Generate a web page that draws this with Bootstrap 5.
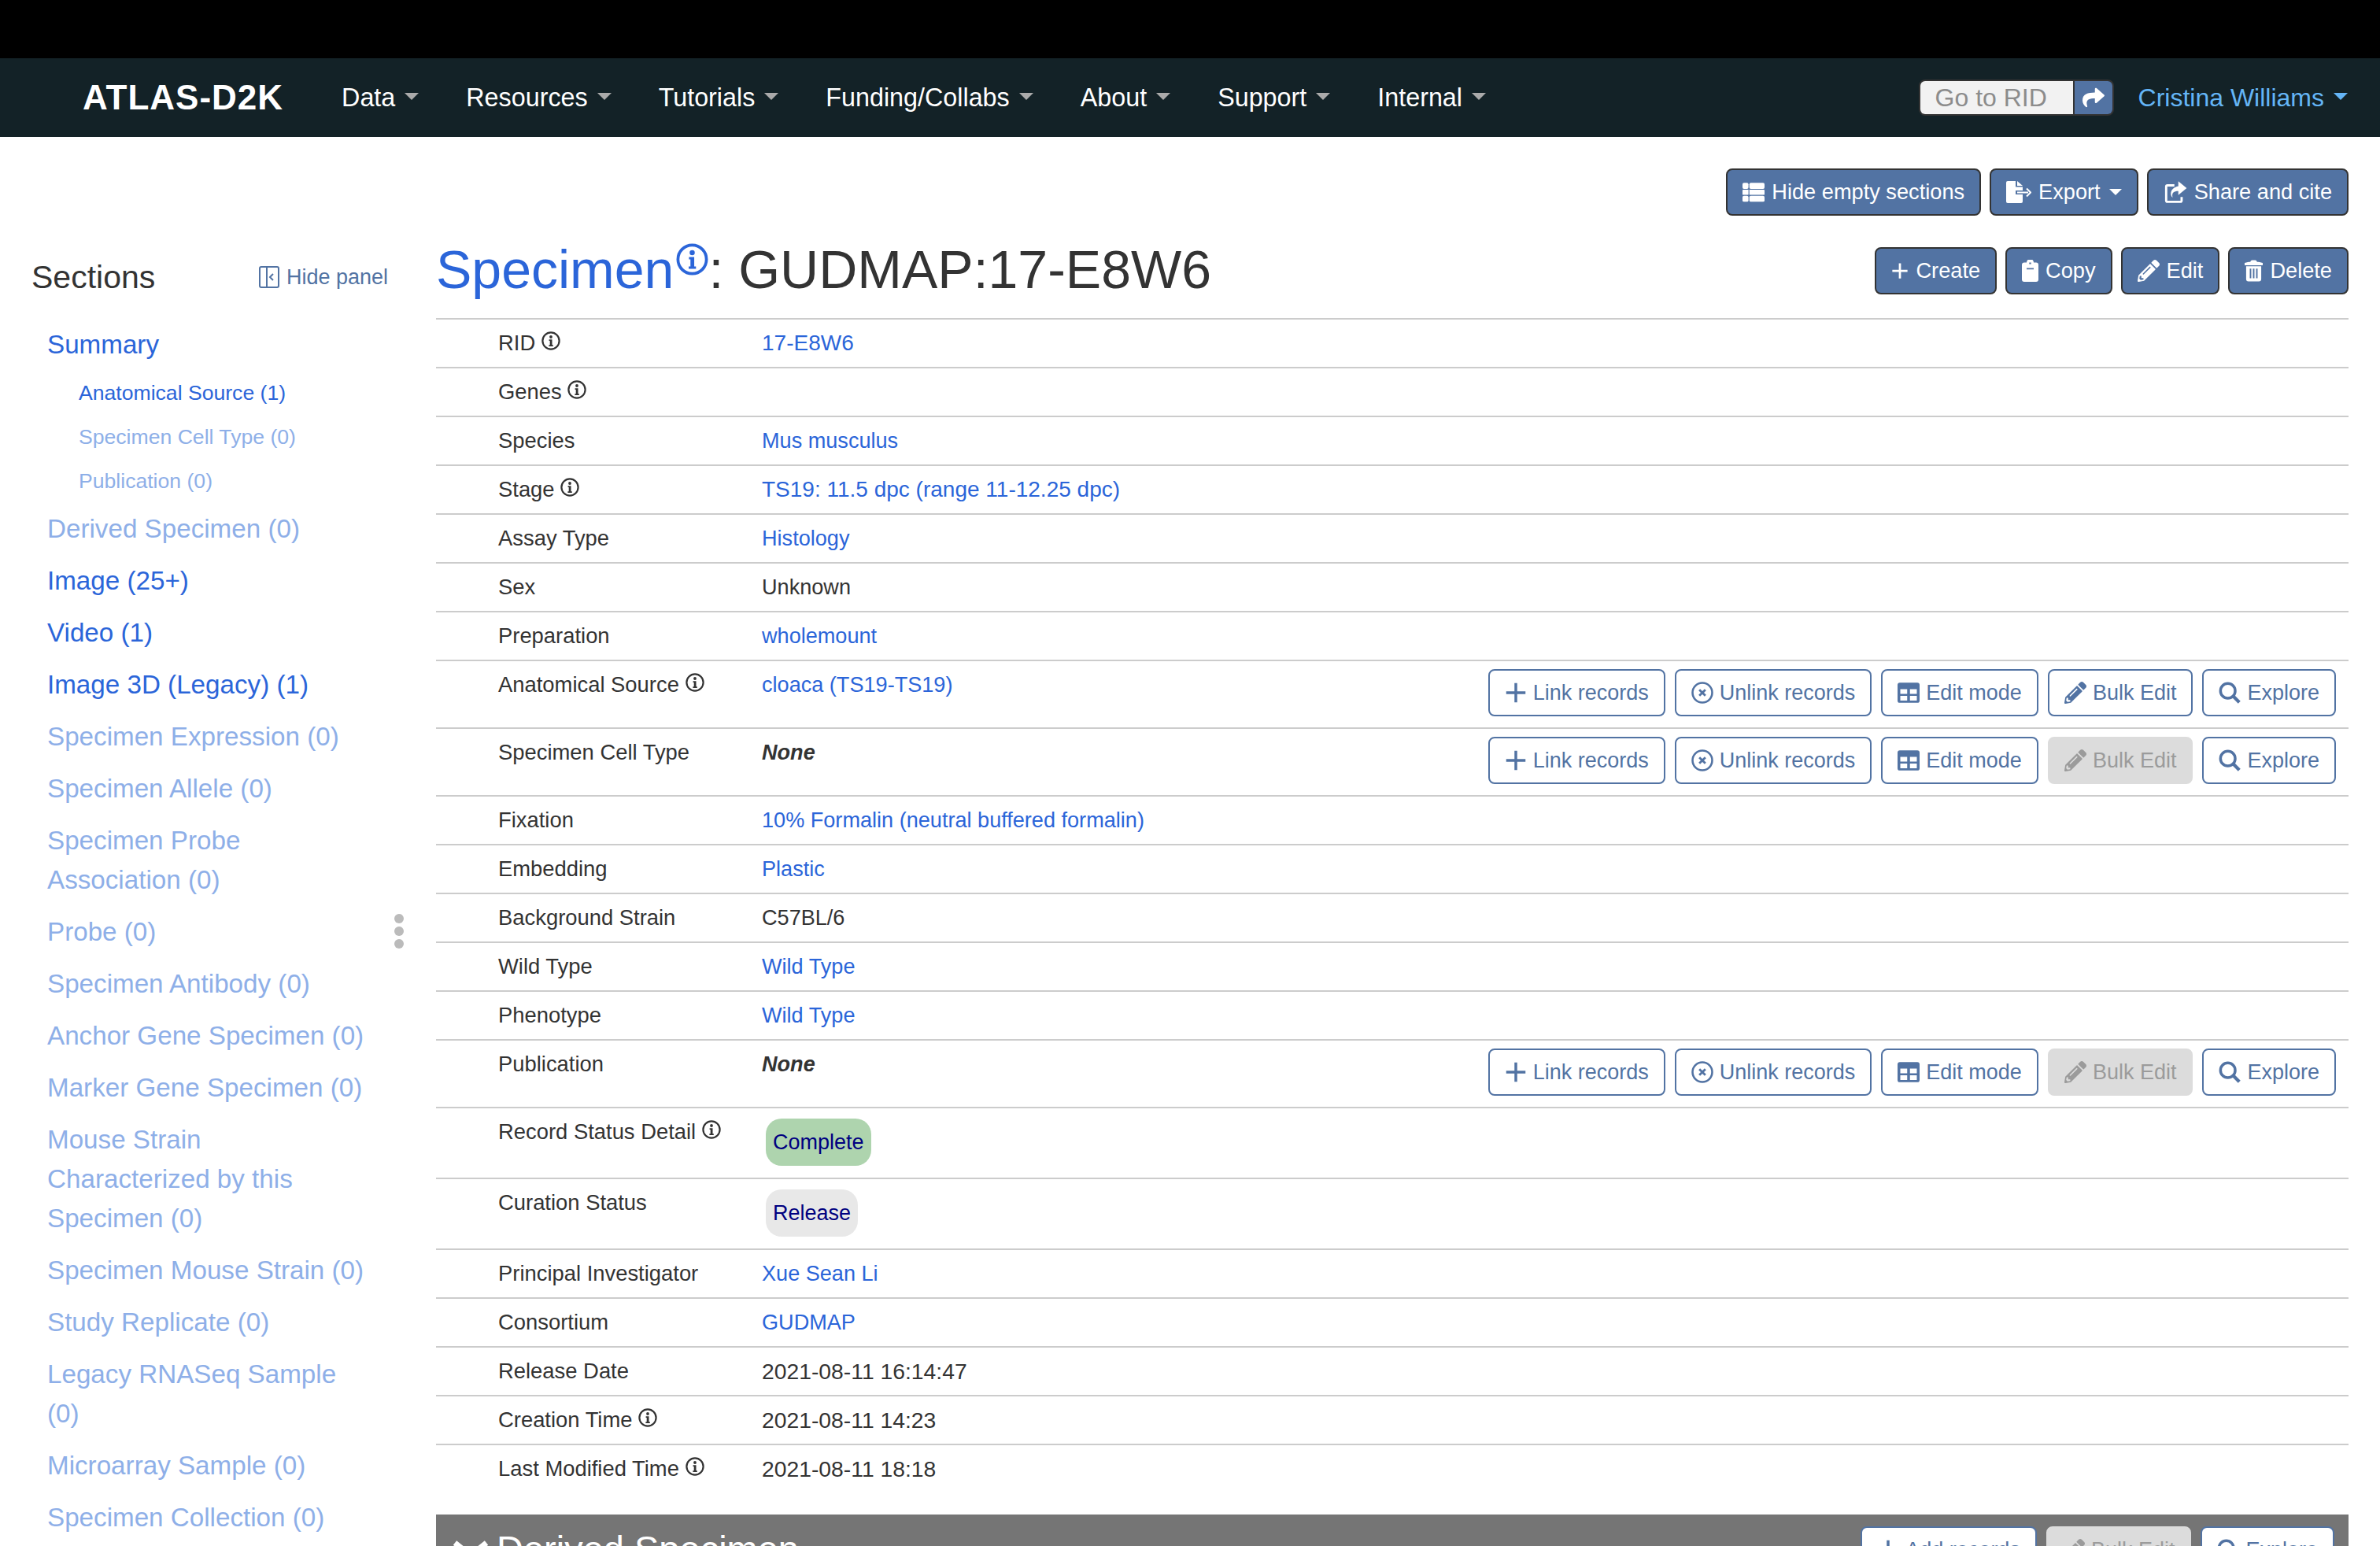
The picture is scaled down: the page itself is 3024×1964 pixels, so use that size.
<!DOCTYPE html>
<html lang="en">
<head>
  <meta charset="UTF-8">
  <meta name="viewport" content="width=device-width, initial-scale=1.0">
  <title>Specimen: GUDMAP:17-E8W6</title>
  <link href="https://cdn.jsdelivr.net/npm/bootstrap@5.3.2/dist/css/bootstrap.min.css" rel="stylesheet">
  <style>
    html, body { height: 100%; }
    body {
      font-family: "Liberation Sans", Arial, sans-serif;
      font-size: 27.4px;
      line-height: 40px;
      color: #333;
      overflow: hidden;
      display: flex;
      flex-direction: column;
    }
    a { text-decoration: none; color: #2b65d9; }
    .top-strip { height: 74px; background: #000; flex: none; }

    /* navbar */
    .atlas-nav { height: 100px; background: #132227; padding: 0 41px 0 105px; flex: none; }
    .atlas-nav .navbar-brand { font-size: 44px; font-weight: 700; color: #fff; letter-spacing: 1px; margin-right: 44px; padding: 0; line-height: 50px; }
    .atlas-nav .navbar-nav .nav-link { font-size: 32.3px; line-height: 44px; color: #fff; padding: 0 30px; }
    .atlas-nav .dropdown-toggle::after { margin-left: 12px; color: #aaa; }
    .atlas-nav .user-link { color: #64b5f6; font-size: 32px; line-height: 44px; margin-left: 31px; }
    .atlas-nav .user-link::after { color: #64b5f6; }
    .rid-group { width: 248px; height: 46px; flex-wrap: nowrap; border: 2px solid #333; border-radius: 8px; overflow: hidden; }
    .rid-group .form-control { font-family: inherit; font-size: 32px; line-height: 42px; height: 42px; padding: 0 0 0 19px; background: #f2f2f2; border: 0; border-radius: 0; color: #333; min-height: 0; }
    .rid-group .form-control::placeholder { color: #8c8c8c; }
    .rid-group .btn { width: 50px; height: 42px; padding: 0; border: 0; border-left: 2px solid #333; border-radius: 0; background: #5273a3; color: #fff; display: flex; align-items: center; justify-content: center; }

    /* buttons */
    .act-btn {
      font-size: 27.2px;
      line-height: 38px;
      height: 60px;
      padding: 0 19px;
      border-radius: 8px;
      border: 2px solid #333;
      background: #5273a3;
      color: #fff;
      display: inline-flex;
      align-items: center;
      gap: 9px;
      white-space: nowrap;
    }
    .act-btn:hover { background: #5273a3; color: #fff; border-color: #333; }
    .act-btn.dropdown-toggle::after { margin-left: 2px; }
    .line-btn, .off-btn { font-size: 27px; gap: 8px; }
    .line-btn { background: #fff; color: #5273a3; border-color: #5273a3; }
    .line-btn:hover { background: #fff; color: #5273a3; border-color: #5273a3; }
    .off-btn, .off-btn:disabled { background: #dcdcdc; color: #9b9b9b; border-color: #dcdcdc; opacity: 1; }
    .ico { fill: currentColor; flex: none; }
    .ico-28 { width: 28px; height: 28px; }
    .ico-plus-sm { width: 22px; height: 22px; }
    .ico-file { width: 32px; height: 28px; }
    .ico-box { width: 30px; height: 30px; }
    .ico-clip { width: 21px; height: 28px; }
    .ico-bin { width: 23px; height: 28px; }

    .page-tools { padding: 40px 40px 0 0; gap: 11px; flex: none; }
    .page-body { flex: 1 1 auto; min-height: 0; }

    /* sidebar */
    .side-col { width: 554px; flex: none; position: relative; }
    .side-head { height: 131px; padding: 24px 61px 0 40px; }
    .side-title { font-size: 41px; line-height: 50px; }
    .hide-link { font-size: 27px; color: #5273a3; display: flex; align-items: center; gap: 9px; }
    .side-list { list-style: none; margin: 0; padding: 0 0 0 60px; width: 468px; }
    .side-list a { display: block; font-size: 33.2px; line-height: 50px; padding: 8px 0; }
    .side-list .sub-item a { font-size: 26.6px; line-height: 38px; padding: 9px 0 9px 40px; }
    .side-list .is-empty a { color: #8eafe8; }
    .drag-dots { position: absolute; left: 501px; top: 887px; display: flex; flex-direction: column; gap: 4px; }
    .drag-dots span { width: 12px; height: 12px; border-radius: 50%; background: #bbb; }

    /* record */
    .rec-col { flex: 1 1 auto; min-width: 0; padding-right: 40px; }
    .rec-head { height: 130px; }
    .rec-title { font-size: 68px; line-height: 76px; font-weight: 400; margin: 6px 0 0; color: #333; }
    .rec-title svg { width: 41px; height: 41px; vertical-align: 16px; margin-left: 3px; color: #2b65d9; }
    .title-tools { gap: 11px; padding-top: 10px; }
    .rec-table { margin: 0; border-top: 2px solid #ccc; color: #333; }
    .rec-table > tbody > tr > td { padding: 10px 0; border-bottom: 2px solid #ccc; vertical-align: top; background: transparent; color: #333; box-shadow: none; font-size: 27.1px; }
    .rec-table > tbody > tr > td:first-child { width: 414px; padding-left: 79px; font-size: 27.4px; }
    .rec-table > tbody > tr > td:last-child { padding-right: 16px; }
    .rec-table > tbody > tr:last-child > td { border-bottom: 0; }
    .rec-table > tbody > tr > td.num-cell { font-size: 28px; }
    .rec-table > tbody > tr > td.date-cell { font-size: 28.3px; }
    .rec-table a { color: #2b65d9; }
    .info-dot { width: 24px; height: 24px; vertical-align: top; margin: 5px 0 0 0; }
    .row-tools { gap: 12px; margin: 0 0 4px; }
    .status-pill { display: block; width: fit-content; height: 60px; line-height: 60px; font-size: 27px; padding: 0 9px; margin: 3px 0 5px 5px; border-radius: 20px; color: #000080; }
    .pill-green { background: #aed4ae; }
    .pill-grey { background: #e8e8e8; }
    .none-val { font-weight: 700; font-style: italic; }

    .sect-bar { margin-top: 28px; height: 100px; background: #757575; color: #fff; padding: 15px 18px 0 22px; align-items: flex-start; }
    .sect-bar h2 { font-size: 47px; line-height: 50px; font-weight: 400; margin: 4px 0 0; }
    .sect-name { gap: 11px; }
  </style>
</head>
<body>
  <!-- icons, all drawn on a 24 box unless noted -->
  <svg width="0" height="0" class="position-absolute">
    <symbol id="i-info" viewBox="0 0 24 24">
      <circle cx="12" cy="12" r="10.6" fill="none" stroke="currentColor" stroke-width="2.2"/>
      <circle cx="12" cy="7" r="1.9"/>
      <path d="M9.600 10.200h3.900v7h1.300v1.800H9.400v-1.800h1.300v-5.200H9.600z"/>
    </symbol>
    <symbol id="i-rows" viewBox="0 0 24 24">
      <rect x="0" y="2" width="6.500" height="6.500" rx="1.600"/><rect x="7.500" y="2" width="16.500" height="6.500" rx="1.600"/>
      <rect x="0" y="9.500" width="6.500" height="5.500" rx=".4"/><rect x="7.500" y="9.500" width="16.500" height="5.500" rx=".4"/>
      <rect x="0" y="16" width="6.500" height="6.500" rx="1.600"/><rect x="7.500" y="16" width="16.500" height="6.500" rx="1.600"/>
    </symbol>
    <symbol id="i-export" viewBox="0 0 32 28">
      <path d="M0 2a2 2 0 0 1 2-2h10v7.500h9V12H12v5h9v9a2 2 0 0 1-2 2H2a2 2 0 0 1-2-2z"/>
      <path d="M14 0l7 6h-7z"/>
      <path d="M14 13.500h14v2H14z"/>
      <path d="M26 9.500l5 5-5 5" fill="none" stroke="currentColor" stroke-width="2"/>
    </symbol>
    <symbol id="i-share-box" viewBox="0 0 24 24">
      <path d="M11 4H4a2.500 2.500 0 0 0-2.500 2.500v14A2.500 2.500 0 0 0 4 23h13a2.500 2.500 0 0 0 2.500-2.500V17h-2.300v3.700H3.800V6.300H11z"/>
      <path d="M15 1l8.500 7-8.500 7v-4c-4.500 0-7 1.500-5.800 6.500C6.500 15.500 6 8 15 6z"/>
    </symbol>
    <symbol id="i-plus" viewBox="0 0 24 24">
      <path d="M10.500 1.500h3v9h9v3h-9v9h-3v-9h-9v-3h9z"/>
    </symbol>
    <symbol id="i-clip" viewBox="0 0 21 28">
      <path fill-rule="evenodd" d="M6 3.500a4.500 4.500 0 0 1 9 0h3a3 3 0 0 1 3 3V25a3 3 0 0 1-3 3H3a3 3 0 0 1-3-3V6.500a3 3 0 0 1 3-3zM9.300 3.500v2h2.400v-2zM6 10.500v1.800h9v-1.800z"/>
    </symbol>
    <symbol id="i-pencil" viewBox="0 0 512 512">
      <path d="M497.900 142.100l-46.100 46.100c-4.700 4.700-12.300 4.700-17 0l-111-111c-4.700-4.700-4.700-12.300 0-17l46.100-46.100c18.700-18.700 49.100-18.700 67.900 0l60.100 60.100c18.800 18.700 18.800 49.100 0 67.900zM284.200 99.800L21.600 362.400.4 483.900c-2.900 16.400 11.400 30.600 27.800 27.800l121.500-21.300 262.600-262.600c4.700-4.700 4.700-12.300 0-17l-111-111c-4.800-4.700-12.400-4.700-17.100 0zM124.100 339.900c-5.500-5.500-5.500-14.300 0-19.800l154-154c5.500-5.500 14.300-5.500 19.800 0s5.500 14.300 0 19.800l-154 154c-5.500 5.500-14.300 5.500-19.800 0zM88 424h48v36.300l-64.500 11.300-31.100-31.100L51.700 376H88v48z"/>
    </symbol>
    <symbol id="i-trash" viewBox="0 0 24 28">
      <path d="M0 3.500C3 2.500 5.500 2.300 7.500 2.200 8 .8 9 0 10 0h4c1 0 2 .8 2.500 2.200 2 .1 4.500.3 7.500 1.300v3.300H0z"/>
      <path fill-rule="evenodd" d="M2 8h20v17a3 3 0 0 1-3 3H5a3 3 0 0 1-3-3zM6.800 11v13h2V11zM11 11v13h2V11zM15.200 11v13h2V11z"/>
    </symbol>
    <symbol id="i-unlink" viewBox="0 0 24 24">
      <circle cx="12" cy="12" r="10.700" fill="none" stroke="currentColor" stroke-width="2.200"/>
      <path d="M8.700 8.700l6.600 6.600M15.300 8.700l-6.600 6.600" stroke="currentColor" stroke-width="2.400"/>
    </symbol>
    <symbol id="i-table" viewBox="0 0 24 24">
      <path fill-rule="evenodd" d="M2.500 1h19A2.500 2.500 0 0 1 24 3.500v17a2.500 2.500 0 0 1-2.500 2.500h-19A2.500 2.500 0 0 1 0 20.500v-17A2.500 2.500 0 0 1 2.500 1zM3 8.200v5h7.500v-5zM13.500 8.200v5H21v-5zM3 15.500v5h7.500v-5zM13.500 15.500v5H21v-5z"/>
    </symbol>
    <symbol id="i-search" viewBox="0 0 24 24">
      <circle cx="10" cy="10" r="8" fill="none" stroke="currentColor" stroke-width="3"/>
      <path d="M15.500 15.500l7 7" stroke="currentColor" stroke-width="3.600"/>
    </symbol>
    <symbol id="i-share" viewBox="0 0 512 512">
      <path d="M503.691 189.836L327.687 37.851C312.281 24.546 288 35.347 288 56.015v80.053C127.371 137.907 0 170.100 0 322.326c0 61.441 39.581 122.309 83.333 154.132 13.653 9.931 33.111-2.533 28.077-18.631C66.066 312.814 132.917 274.316 288 272.085V360c0 20.700 24.300 31.453 39.687 18.164l176.004-152c11.071-9.562 11.086-26.753 0-36.328z"/>
    </symbol>
  </svg>

  <div class="top-strip"></div>

  <nav class="navbar navbar-expand atlas-nav">
    <a class="navbar-brand" href="#">ATLAS-D2K</a>
    <ul class="navbar-nav me-auto">
      <li class="nav-item dropdown"><a class="nav-link dropdown-toggle" href="#" data-bs-toggle="dropdown">Data</a></li>
      <li class="nav-item dropdown"><a class="nav-link dropdown-toggle" href="#" data-bs-toggle="dropdown">Resources</a></li>
      <li class="nav-item dropdown"><a class="nav-link dropdown-toggle" href="#" data-bs-toggle="dropdown">Tutorials</a></li>
      <li class="nav-item dropdown"><a class="nav-link dropdown-toggle" href="#" data-bs-toggle="dropdown">Funding/Collabs</a></li>
      <li class="nav-item dropdown"><a class="nav-link dropdown-toggle" href="#" data-bs-toggle="dropdown">About</a></li>
      <li class="nav-item dropdown"><a class="nav-link dropdown-toggle" href="#" data-bs-toggle="dropdown">Support</a></li>
      <li class="nav-item dropdown"><a class="nav-link dropdown-toggle" href="#" data-bs-toggle="dropdown">Internal</a></li>
    </ul>
    <div class="input-group rid-group">
      <input type="text" class="form-control" placeholder="Go to RID">
      <button class="btn" type="button"><svg class="ico" width="28" height="28"><use href="#i-share"/></svg></button>
    </div>
    <a class="user-link dropdown-toggle" href="#" data-bs-toggle="dropdown">Cristina Williams</a>
  </nav>

  <div class="d-flex justify-content-end page-tools">
    <button class="btn act-btn"><svg class="ico ico-28"><use href="#i-rows"/></svg>Hide empty sections</button>
    <button class="btn act-btn dropdown-toggle"><svg class="ico ico-file"><use href="#i-export"/></svg>Export</button>
    <button class="btn act-btn"><svg class="ico ico-box"><use href="#i-share-box"/></svg>Share and cite</button>
  </div>

  <div class="d-flex page-body">
    <aside class="side-col">
      <div class="d-flex justify-content-between align-items-center side-head">
        <span class="side-title">Sections</span>
        <a class="hide-link" href="#">
          <svg width="26" height="28" viewBox="0 0 26 28" fill="none" stroke="currentColor" stroke-width="2"><rect x="1" y="1" width="24" height="26" rx="2"/><path d="M10 1v26M18 10l-4 4 4 4"/></svg>
          Hide panel
        </a>
      </div>
      <ul class="side-list">
        <li><a href="#">Summary</a></li>
        <li class="sub-item"><a href="#">Anatomical Source (1)</a></li>
        <li class="sub-item is-empty"><a href="#">Specimen Cell Type (0)</a></li>
        <li class="sub-item is-empty"><a href="#">Publication (0)</a></li>
        <li class="is-empty"><a href="#">Derived Specimen (0)</a></li>
        <li><a href="#">Image (25+)</a></li>
        <li><a href="#">Video (1)</a></li>
        <li><a href="#">Image 3D (Legacy) (1)</a></li>
        <li class="is-empty"><a href="#">Specimen Expression (0)</a></li>
        <li class="is-empty"><a href="#">Specimen Allele (0)</a></li>
        <li class="is-empty"><a href="#">Specimen Probe Association (0)</a></li>
        <li class="is-empty"><a href="#">Probe (0)</a></li>
        <li class="is-empty"><a href="#">Specimen Antibody (0)</a></li>
        <li class="is-empty"><a href="#">Anchor Gene Specimen (0)</a></li>
        <li class="is-empty"><a href="#">Marker Gene Specimen (0)</a></li>
        <li class="is-empty"><a href="#">Mouse Strain Characterized by this Specimen (0)</a></li>
        <li class="is-empty"><a href="#">Specimen Mouse Strain (0)</a></li>
        <li class="is-empty"><a href="#">Study Replicate (0)</a></li>
        <li class="is-empty"><a href="#">Legacy RNASeq Sample (0)</a></li>
        <li class="is-empty"><a href="#">Microarray Sample (0)</a></li>
        <li class="is-empty"><a href="#">Specimen Collection (0)</a></li>
      </ul>
      <div class="drag-dots"><span></span><span></span><span></span></div>
    </aside>

    <main class="rec-col">
      <div class="d-flex justify-content-between align-items-center rec-head">
        <h1 class="rec-title"><a href="#">Specimen<svg class="ico"><use href="#i-info"/></svg></a>: GUDMAP:17-E8W6</h1>
        <div class="d-flex title-tools">
          <button class="btn act-btn"><svg class="ico ico-plus-sm"><use href="#i-plus"/></svg>Create</button>
          <button class="btn act-btn"><svg class="ico ico-clip"><use href="#i-clip"/></svg>Copy</button>
          <button class="btn act-btn"><svg class="ico ico-28"><use href="#i-pencil"/></svg>Edit</button>
          <button class="btn act-btn"><svg class="ico ico-bin"><use href="#i-trash"/></svg>Delete</button>
        </div>
      </div>

      <table class="table rec-table">
        <tbody>
          <tr><td>RID <svg class="ico info-dot"><use href="#i-info"/></svg></td><td class="num-cell"><a href="#">17-E8W6</a></td></tr>
          <tr><td>Genes <svg class="ico info-dot"><use href="#i-info"/></svg></td><td></td></tr>
          <tr><td>Species</td><td><a href="#">Mus musculus</a></td></tr>
          <tr><td>Stage <svg class="ico info-dot"><use href="#i-info"/></svg></td><td class="num-cell"><a href="#">TS19: 11.5 dpc (range 11-12.25 dpc)</a></td></tr>
          <tr><td>Assay Type</td><td><a href="#">Histology</a></td></tr>
          <tr><td>Sex</td><td>Unknown</td></tr>
          <tr><td>Preparation</td><td><a href="#">wholemount</a></td></tr>
          <tr>
            <td>Anatomical Source <svg class="ico info-dot"><use href="#i-info"/></svg></td>
            <td>
              <div class="d-flex justify-content-between">
                <a href="#">cloaca (TS19-TS19)</a>
                <div class="d-flex row-tools">
                  <button class="btn act-btn line-btn"><svg class="ico ico-28"><use href="#i-plus"/></svg>Link records</button>
                  <button class="btn act-btn line-btn"><svg class="ico ico-28"><use href="#i-unlink"/></svg>Unlink records</button>
                  <button class="btn act-btn line-btn"><svg class="ico ico-28"><use href="#i-table"/></svg>Edit mode</button>
                  <button class="btn act-btn line-btn"><svg class="ico ico-28"><use href="#i-pencil"/></svg>Bulk Edit</button>
                  <button class="btn act-btn line-btn"><svg class="ico ico-28"><use href="#i-search"/></svg>Explore</button>
                </div>
              </div>
            </td>
          </tr>
          <tr>
            <td>Specimen Cell Type</td>
            <td>
              <div class="d-flex justify-content-between">
                <span class="none-val">None</span>
                <div class="d-flex row-tools">
                  <button class="btn act-btn line-btn"><svg class="ico ico-28"><use href="#i-plus"/></svg>Link records</button>
                  <button class="btn act-btn line-btn"><svg class="ico ico-28"><use href="#i-unlink"/></svg>Unlink records</button>
                  <button class="btn act-btn line-btn"><svg class="ico ico-28"><use href="#i-table"/></svg>Edit mode</button>
                  <button class="btn act-btn off-btn" disabled><svg class="ico ico-28"><use href="#i-pencil"/></svg>Bulk Edit</button>
                  <button class="btn act-btn line-btn"><svg class="ico ico-28"><use href="#i-search"/></svg>Explore</button>
                </div>
              </div>
            </td>
          </tr>
          <tr><td>Fixation</td><td><a href="#">10% Formalin (neutral buffered formalin)</a></td></tr>
          <tr><td>Embedding</td><td><a href="#">Plastic</a></td></tr>
          <tr><td>Background Strain</td><td>C57BL/6</td></tr>
          <tr><td>Wild Type</td><td><a href="#">Wild Type</a></td></tr>
          <tr><td>Phenotype</td><td><a href="#">Wild Type</a></td></tr>
          <tr>
            <td>Publication</td>
            <td>
              <div class="d-flex justify-content-between">
                <span class="none-val">None</span>
                <div class="d-flex row-tools">
                  <button class="btn act-btn line-btn"><svg class="ico ico-28"><use href="#i-plus"/></svg>Link records</button>
                  <button class="btn act-btn line-btn"><svg class="ico ico-28"><use href="#i-unlink"/></svg>Unlink records</button>
                  <button class="btn act-btn line-btn"><svg class="ico ico-28"><use href="#i-table"/></svg>Edit mode</button>
                  <button class="btn act-btn off-btn" disabled><svg class="ico ico-28"><use href="#i-pencil"/></svg>Bulk Edit</button>
                  <button class="btn act-btn line-btn"><svg class="ico ico-28"><use href="#i-search"/></svg>Explore</button>
                </div>
              </div>
            </td>
          </tr>
          <tr><td>Record Status Detail <svg class="ico info-dot"><use href="#i-info"/></svg></td><td><span class="status-pill pill-green">Complete</span></td></tr>
          <tr><td>Curation Status</td><td><span class="status-pill pill-grey">Release</span></td></tr>
          <tr><td>Principal Investigator</td><td><a href="#">Xue Sean Li</a></td></tr>
          <tr><td>Consortium</td><td><a href="#">GUDMAP</a></td></tr>
          <tr><td>Release Date</td><td class="date-cell">2021-08-11 16:14:47</td></tr>
          <tr><td>Creation Time <svg class="ico info-dot"><use href="#i-info"/></svg></td><td class="date-cell">2021-08-11 14:23</td></tr>
          <tr><td>Last Modified Time <svg class="ico info-dot"><use href="#i-info"/></svg></td><td class="date-cell">2021-08-11 18:18</td></tr>
        </tbody>
      </table>

      <div class="d-flex justify-content-between sect-bar">
        <div class="d-flex sect-name">
          <svg width="44" height="50" viewBox="0 0 44 50" fill="none" stroke="#fff" stroke-width="7"><path d="M2 21l20 16 20-16"/></svg>
          <h2>Derived Specimen</h2>
        </div>
        <div class="d-flex row-tools">
          <button class="btn act-btn line-btn"><svg class="ico ico-28"><use href="#i-plus"/></svg>Add records</button>
          <button class="btn act-btn off-btn" disabled><svg class="ico ico-28"><use href="#i-pencil"/></svg>Bulk Edit</button>
          <button class="btn act-btn line-btn"><svg class="ico ico-28"><use href="#i-search"/></svg>Explore</button>
        </div>
      </div>
    </main>
  </div>

  <script src="https://cdn.jsdelivr.net/npm/bootstrap@5.3.2/dist/js/bootstrap.bundle.min.js"></script>
</body>
</html>
